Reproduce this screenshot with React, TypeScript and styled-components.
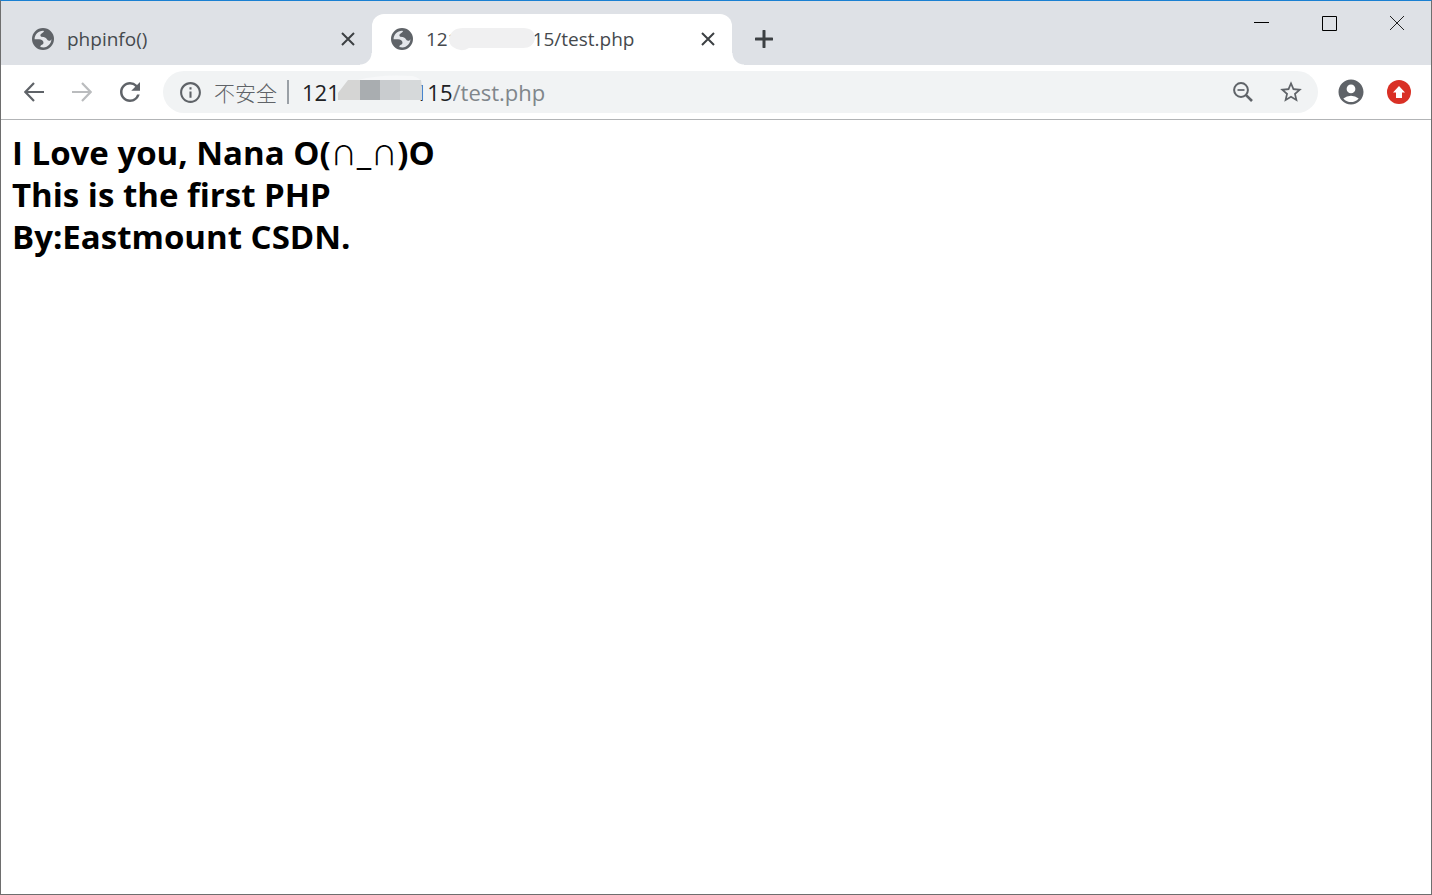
import React from "react";
import styled, { createGlobalStyle } from "styled-components";
import { MdRefresh, MdInfoOutline, MdStarBorder, MdAccountCircle } from "react-icons/md";

const uiFont = `"Open Sans", "Noto Sans CJK SC", sans-serif`;

const GlobalStyle = createGlobalStyle`
  *, *::before, *::after { box-sizing: border-box; }
  body { margin: 0; background: #fff; font-family: ${uiFont}; }
  button { border: 0; padding: 0; margin: 0; background: none; font: inherit; }
`;

const Frame = styled.div`
  min-height: 100vh;
  display: flex;
  flex-direction: column;
  border: 1px solid #6e6e6e;
  border-top-color: #1a80d2;
  background: #fff;
`;

const TabStrip = styled.header`
  display: flex;
  height: 64px;
  padding-left: 12px;
  background: #dee1e6;
`;

const Tabs = styled.div`
  display: flex;
  align-items: flex-end;
`;

const Tab = styled.div<{ $active?: boolean }>`
  position: relative;
  display: flex;
  align-items: center;
  width: ${(p) => (p.$active ? 360 : 359)}px;
  height: 51px;
  padding: 0 13px 1px 19px;
  border-radius: 12px 12px 0 0;
  color: #3c4043;
  background: ${(p) => (p.$active ? "#fff" : "transparent")};
`;

const TabFoot = styled.span<{ $side: "left" | "right" }>`
  position: absolute;
  bottom: 0;
  ${(p) => p.$side}: -12px;
  width: 12px;
  height: 12px;
  background: radial-gradient(
    circle at ${(p) => (p.$side === "left" ? "0 0" : "100% 0")},
    #dee1e6 11px,
    #fff 12px
  );
`;

const TabTitle = styled.button`
  display: flex;
  align-items: center;
  flex: 1;
  gap: 13px;
  font-size: 19px;
  line-height: 26px;
  color: #45494d;
  text-align: left;
`;

const TabAddress = styled.span`
  display: flex;
  align-items: center;
`;

const CloseTab = styled.button`
  display: flex;
  align-items: center;
  justify-content: center;
  width: 22px;
  height: 22px;
`;

const NewTab = styled.button`
  display: flex;
  align-items: center;
  justify-content: center;
  width: 42px;
  height: 51px;
  margin-left: 11px;
  padding-bottom: 1px;
`;

const WindowControls = styled.div`
  display: flex;
  margin-left: auto;
`;

const WindowButton = styled.button`
  display: flex;
  align-items: center;
  justify-content: center;
  width: 68px;
  height: 44px;
`;

const Toolbar = styled.nav`
  display: flex;
  align-items: center;
  height: 55px;
  padding: 0 8px 0 9px;
  border-bottom: 1px solid #b2b4b6;
  background: #fff;
`;

const ToolButton = styled.button<{ $faded?: boolean }>`
  display: flex;
  align-items: center;
  justify-content: center;
  flex: none;
  width: 48px;
  height: 42px;
  color: ${(p) => (p.$faded ? "#babcbe" : "#5f6368")};
`;

const Omnibox = styled.form`
  display: flex;
  align-items: center;
  flex: 1;
  min-width: 0;
  height: 42px;
  margin: 0 9px 0 9px;
  padding: 0 3px 0 15px;
  border-radius: 21px;
  background: #f1f3f4;
`;

const Security = styled.button`
  display: flex;
  align-items: center;
  gap: 11px;
  padding-right: 10px;
  border-right: 2px solid #9aa0a6;
  height: 24px;
  font-family: "Noto Sans CJK SC", sans-serif;
  font-weight: 300;
  font-size: 21px;
  line-height: 24px;
  color: #5f6368;
`;

const Host = styled.label`
  display: flex;
  align-items: center;
  padding-left: 13px;
  font-size: 22px;
  line-height: 30px;
  color: #202124;
`;

const Cover = styled.svg<{ $before: number; $after: number }>`
  position: relative;
  margin: 0 ${(p) => -p.$after}px 0 ${(p) => -p.$before}px;
`;

const PathInput = styled.input`
  flex: 1;
  min-width: 0;
  height: 30px;
  padding: 0;
  border: 0;
  outline: 0;
  background: transparent;
  font-family: ${uiFont};
  font-size: 22px;
  color: #80868b;
`;

const Page = styled.main`
  flex: 1;
  padding: 12px 11px;
`;

const Message = styled.h1`
  margin: 0;
  font-family: "Open Sans", "Noto Sans", sans-serif;
  font-weight: 700;
  font-size: 33px;
  line-height: 42px;
  color: #000;
`;

const Face = styled.span`
  font-weight: 400;
  line-height: 1;
`;

const Eye = styled.span`
  font-family: "Noto Sans CJK SC", sans-serif;
  font-size: 26px;
  line-height: 1;
`;

const Cross = ({ size, width, color }: { size: number; width: number; color: string }) => (
  <svg width={size} height={size} viewBox={`0 0 ${size} ${size}`} aria-hidden="true">
    <path d={`M1 1L${size - 1} ${size - 1}M${size - 1} 1L1 ${size - 1}`} stroke={color} strokeWidth={width} />
  </svg>
);

const Globe = () => (
  <svg width="22" height="22" viewBox="0 0 22 22" aria-hidden="true">
    <circle cx="11" cy="11" r="9.8" fill="#e4e6ea" />
    <path
      fill="#5f6368"
      fillRule="evenodd"
      d="M11 0A11 11 0 1 1 11 22A11 11 0 1 1 11 0ZM2.6 11.2C2.6 6.4 6.3 2.8 11 2.7L12 3C11.6 5.3 8.2 5.2 8.4 7.6C8.6 9.2 11.3 9 13 9.6C15 10.3 14.8 12.6 17 12.8C18.5 12.9 19 12 19.4 11C19.4 15.5 16 19.2 11.5 19.4L8.4 18.9C8.4 16.6 11.5 17 11.5 14.8C11.5 12.4 9.5 11.2 7 11.2Z"
    />
  </svg>
);

const Arrow = ({ forward }: { forward?: boolean }) => (
  <svg width="20" height="20" viewBox="0 0 20 20" fill="none" stroke="currentColor" strokeWidth="2.2" aria-hidden="true">
    <path d={forward ? "M0 10H18M10 1L18.6 10L10 19" : "M20 10H2M10 1L1.4 10L10 19"} />
  </svg>
);

const TabSmudge = () => (
  <Cover $before={10} $after={2} width="86" height="24" viewBox="0 0 86 24" aria-hidden="true">
    <path d="M0 12Q2 1 14 1H72Q86 0 86 12Q84 21 74 21H20Q12 26 4 20Q0 17 0 12Z" fill="#f0f0f1" />
  </Cover>
);

const AddressMosaic = () => (
  <Cover $before={2} $after={7} width="84" height="34" viewBox="0 0 84 34" aria-hidden="true">
    <path d="M20 5Q42 -1 74 1Q83 2 84 10H20Z" fill="#f7f8f9" />
    <path d="M0 25V18L10 5H22V25Z" fill="#d5d5d4" />
    <path d="M22 5H42V25H22Z" fill="#a9adb0" />
    <path d="M42 5H62V25H42Z" fill="#c9cccf" />
    <path d="M62 5H83L84 12V25H62Z" fill="#d6d9da" />
  </Cover>
);

export default function App() {
  return (
    <>
      <GlobalStyle />
      <Frame>
        <TabStrip>
          <Tabs>
            <Tab>
              <TabTitle type="button">
                <Globe />
                phpinfo()
              </TabTitle>
              <CloseTab type="button" aria-label="Close tab">
                <Cross size={14} width={2} color="#3c4043" />
              </CloseTab>
            </Tab>
            <Tab $active>
              <TabFoot $side="left" />
              <TabTitle type="button">
                <Globe />
                <TabAddress>
                  121
                  <TabSmudge />
                  15/test.php
                </TabAddress>
              </TabTitle>
              <CloseTab type="button" aria-label="Close tab">
                <Cross size={14} width={2} color="#3c4043" />
              </CloseTab>
              <TabFoot $side="right" />
            </Tab>
            <NewTab type="button" aria-label="New tab">
              <svg width="18" height="18" viewBox="0 0 18 18" aria-hidden="true">
                <path d="M9 1V17M1 9H17" stroke="#3c4043" strokeWidth="3" strokeLinecap="round" />
              </svg>
            </NewTab>
          </Tabs>
          <WindowControls>
            <WindowButton type="button" aria-label="Minimize">
              <svg width="15" height="15" viewBox="0 0 15 15" aria-hidden="true">
                <path d="M0 6.5H15" stroke="#000" />
              </svg>
            </WindowButton>
            <WindowButton type="button" aria-label="Maximize">
              <svg width="15" height="15" viewBox="0 0 15 15" aria-hidden="true">
                <path d="M.5 .5H14.5V14.5H.5Z" fill="none" stroke="#000" />
              </svg>
            </WindowButton>
            <WindowButton type="button" aria-label="Close window">
              <Cross size={16} width={1} color="#222" />
            </WindowButton>
          </WindowControls>
        </TabStrip>
        <Toolbar aria-label="Navigation">
          <ToolButton type="button" aria-label="Back">
            <Arrow />
          </ToolButton>
          <ToolButton type="button" aria-label="Forward" $faded>
            <Arrow forward />
          </ToolButton>
          <ToolButton type="button" aria-label="Reload">
            <MdRefresh size={30} />
          </ToolButton>
          <Omnibox onSubmit={(e) => e.preventDefault()}>
            <Security type="button">
              <MdInfoOutline size={25} />
              不安全
            </Security>
            <Host htmlFor="address">
              121
              <AddressMosaic />
              115
            </Host>
            <PathInput id="address" type="text" defaultValue="/test.php" spellCheck={false} />
            <ToolButton type="button" aria-label="Zoom out">
              <svg width="20" height="20" viewBox="0 0 20 20" fill="none" stroke="currentColor" aria-hidden="true">
                <circle cx="8" cy="8" r="6.9" strokeWidth="2" />
                <path d="M4.5 8H11.5" strokeWidth="1.7" />
                <path d="M12.8 12.8L19 19" strokeWidth="2.6" />
              </svg>
            </ToolButton>
            <ToolButton type="button" aria-label="Bookmark this page">
              <MdStarBorder size={26} />
            </ToolButton>
          </Omnibox>
          <ToolButton type="button" aria-label="Profile">
            <MdAccountCircle size={30} />
          </ToolButton>
          <ToolButton type="button" aria-label="Update">
            <svg width="24" height="24" viewBox="0 0 24 24" aria-hidden="true">
              <circle cx="12" cy="12" r="12" fill="#d93025" />
              <path d="M12 6L18 12.5H15V18H9V12.5H6Z" fill="#fff" />
            </svg>
          </ToolButton>
        </Toolbar>
        <Page>
          <Message>
            I Love you, Nana O(<Face><Eye>∩</Eye>_<Eye>∩</Eye></Face>)O
            <br />
            This is the first PHP
            <br />
            By:Eastmount CSDN.
          </Message>
        </Page>
      </Frame>
    </>
  );
}
